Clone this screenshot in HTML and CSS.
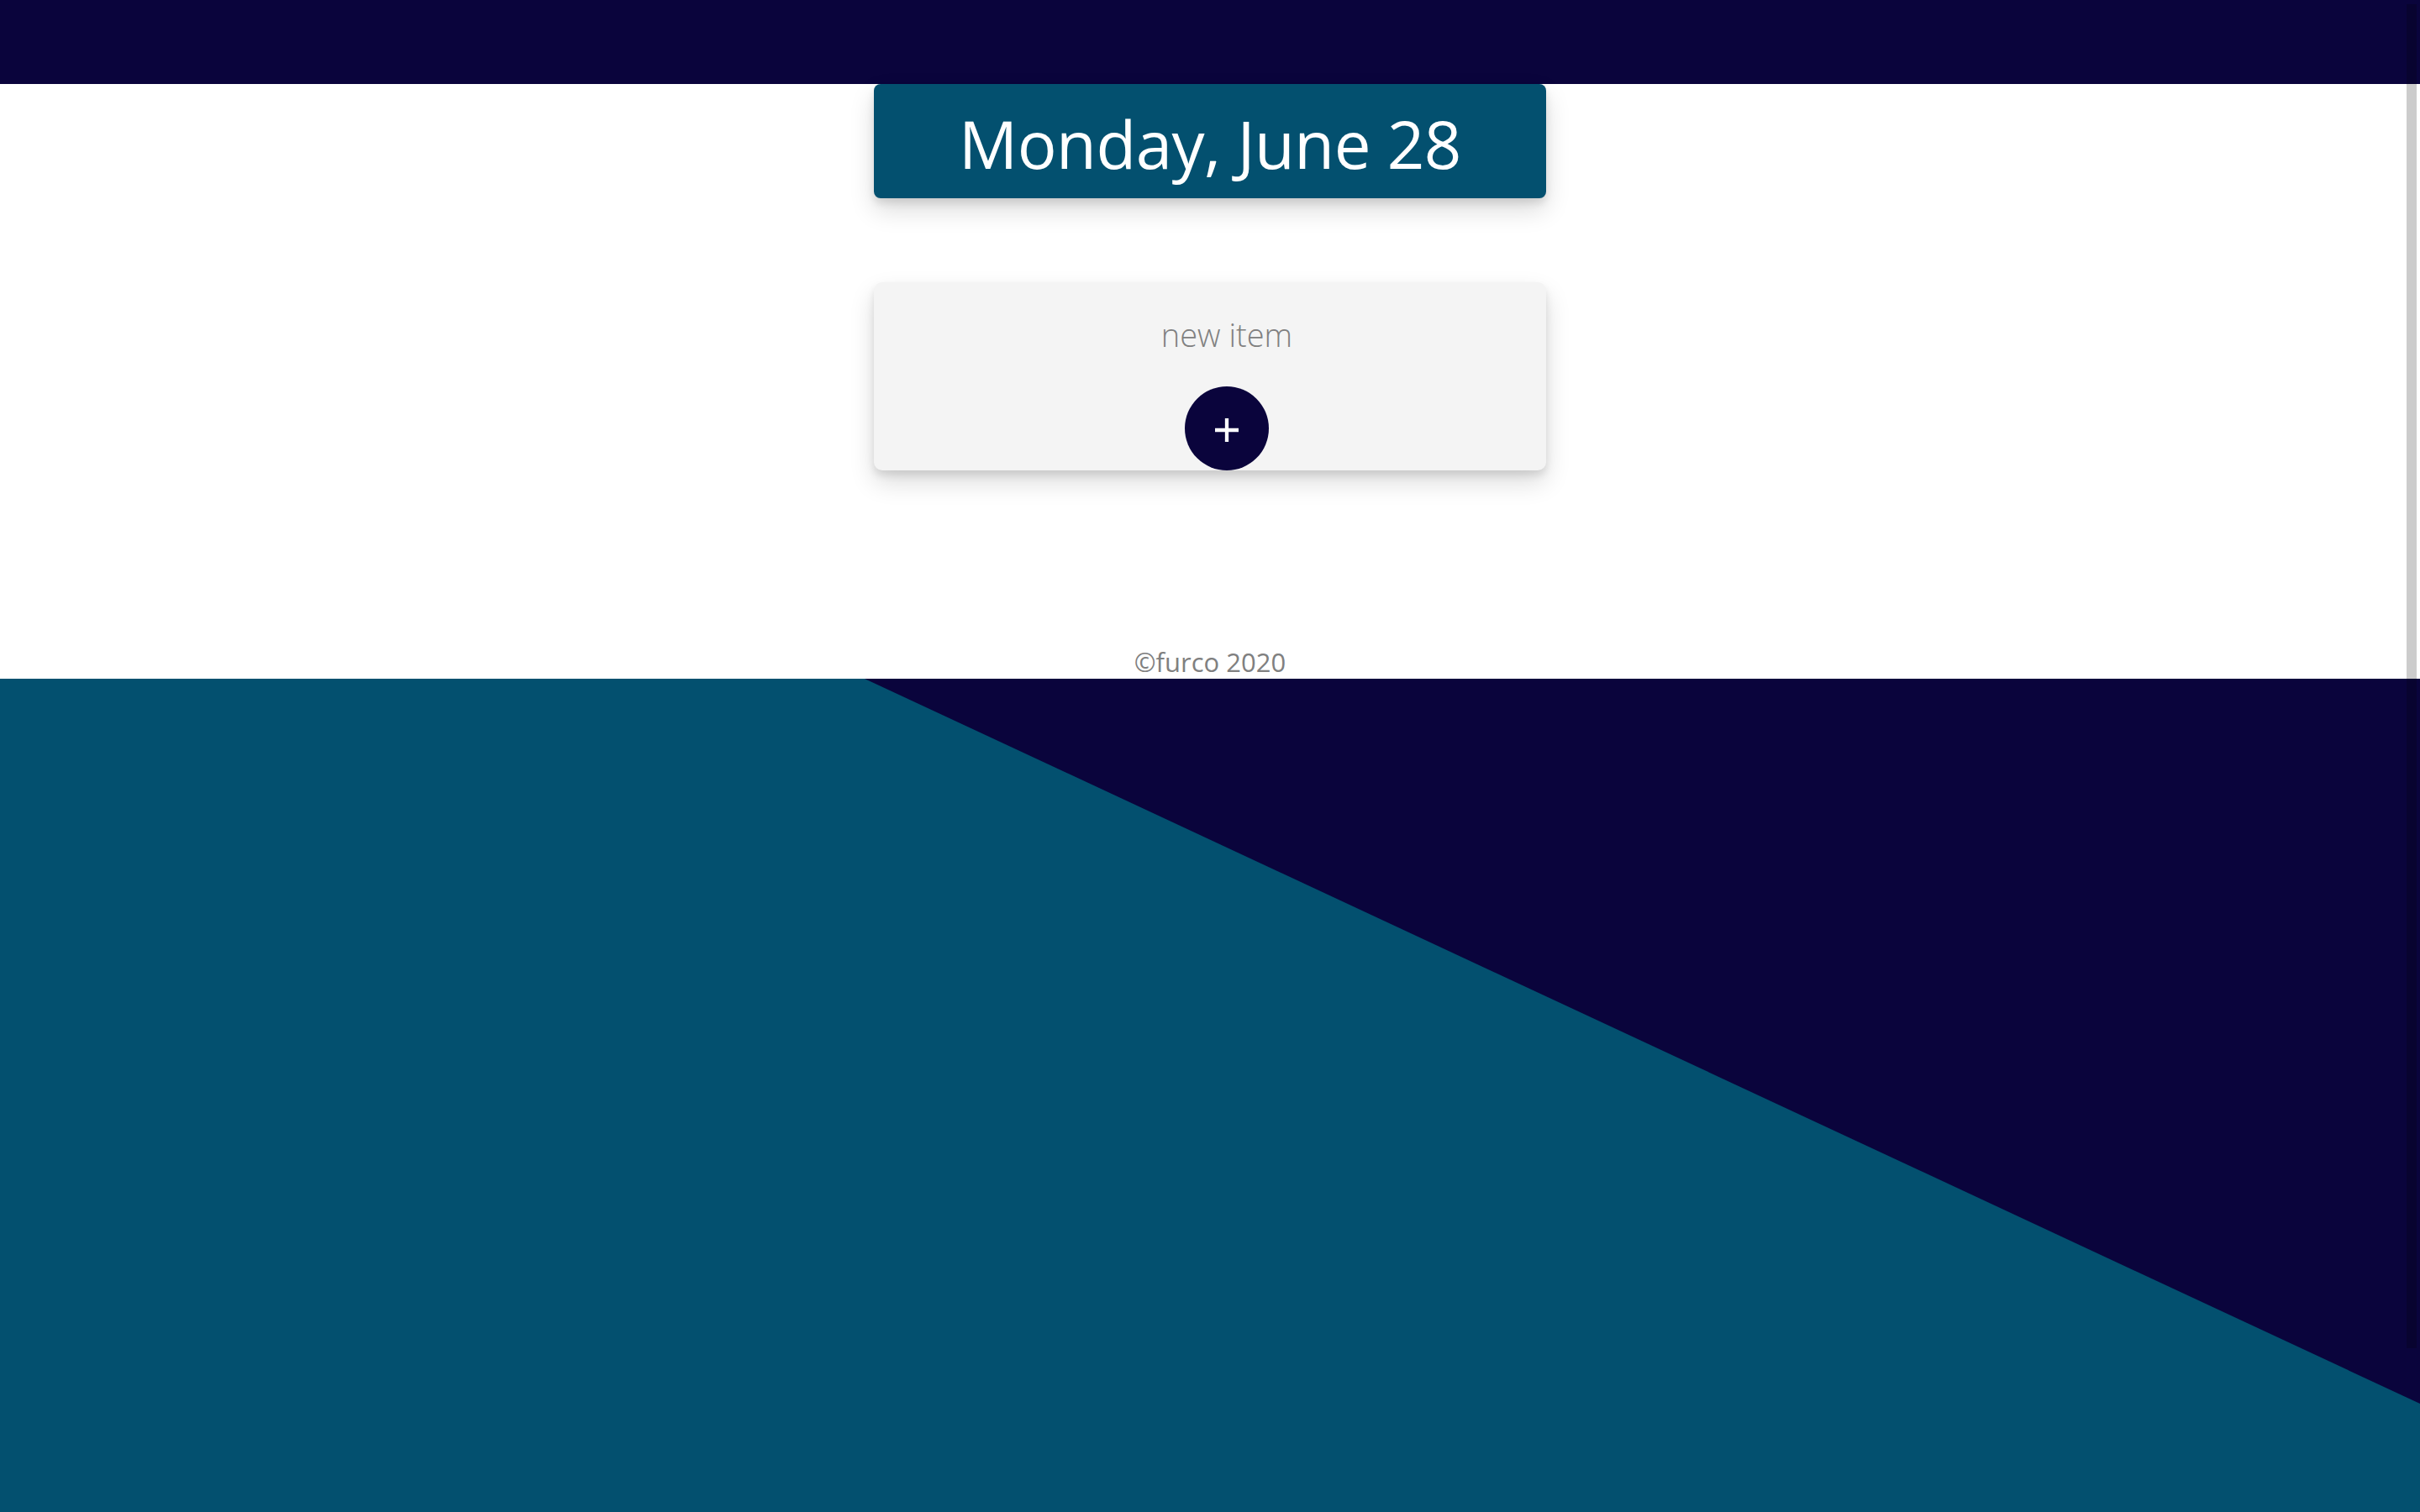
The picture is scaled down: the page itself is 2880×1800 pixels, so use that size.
FILE: index.html
```html
<!DOCTYPE html>
<html lang="en">
<head>
<meta charset="utf-8">
<title>To-do</title>
<link rel="stylesheet" href="styles.css">
</head>
<body>
<header class="topbar"></header>
<main class="content">
  <div class="date-box">
    <h1 class="date-text">Monday, June 28</h1>
  </div>
  <form class="card">
    <input class="new-item" type="text" placeholder="new item">
    <button class="add-btn" type="button" aria-label="add">
      <svg width="28" height="28" viewBox="0 0 28 28"><path d="M14 0V28M0 14H28" stroke="#ffffff" stroke-width="4.3" fill="none"/></svg>
    </button>
  </form>
  <footer class="footer">©furco 2020</footer>
</main>
<section class="bottom">
  <div class="bottom-teal"></div>
</section>
<div class="scroll-thumb"></div>
</body>
</html>
```
FILE: styles.css
```css
html, body {
  margin: 0;
  padding: 0;
}
body {
  width: 2880px;
  height: 1800px;
  overflow: hidden;
  position: relative;
  background: #ffffff;
  font-family: "Open Sans", "Noto Sans", sans-serif;
}
.topbar {
  height: 100px;
  background: #0a043c;
}
.content {
  height: 708px;
  display: flex;
  flex-direction: column;
  align-items: center;
  background: #ffffff;
}
.date-box {
  width: 800px;
  height: 136px;
  background: #03506f;
  border-radius: 8px;
  box-shadow: 0 14px 30px rgba(0, 0, 0, 0.14), 0 6px 10px rgba(0, 0, 0, 0.1);
  display: flex;
  align-items: center;
  justify-content: center;
}
.date-text {
  margin: 0;
  color: #ffffff;
  font-weight: 400;
  font-size: 78px;
  line-height: 1;
  padding-top: 6px;
  letter-spacing: -0.5px;
}
.card {
  margin: 100px 0 0 0;
  width: 800px;
  height: 224px;
  box-sizing: border-box;
  padding: 36px 0 0 40px;
  background: #f4f4f4;
  border-radius: 10px;
  box-shadow: 0 14px 30px rgba(0, 0, 0, 0.14), 0 6px 10px rgba(0, 0, 0, 0.1);
  display: flex;
  flex-direction: column;
  align-items: center;
  justify-content: space-between;
}
.new-item {
  width: 400px;
  border: none;
  outline: none;
  background: transparent;
  text-align: center;
  font-family: "Open Sans", "Noto Sans", sans-serif;
  font-weight: 300;
  font-size: 38px;
  line-height: 52px;
  height: 52px;
  padding: 0;
  color: #808080;
}
.new-item::placeholder {
  color: #808080;
  opacity: 1;
}
.add-btn {
  width: 100px;
  height: 100px;
  border: none;
  border-radius: 50%;
  background: #0a043c;
  padding: 4px 0 0 0;
  display: flex;
  align-items: center;
  justify-content: center;
  cursor: pointer;
}
.footer {
  margin-top: auto;
  height: 40px;
  font-size: 31px;
  line-height: 40px;
  color: #808080;
}
.bottom {
  height: 992px;
  background: #0a043c;
  position: relative;
}
.bottom-teal {
  height: 100%;
  background: #03506f;
  clip-path: polygon(0 0, 1029px 0, 100% 863px, 100% 100%, 0 100%);
}
.scroll-thumb {
  position: absolute;
  top: 5px;
  right: 4px;
  width: 12px;
  height: 1600px;
  background: rgba(0, 0, 0, 0.2);
}
```
